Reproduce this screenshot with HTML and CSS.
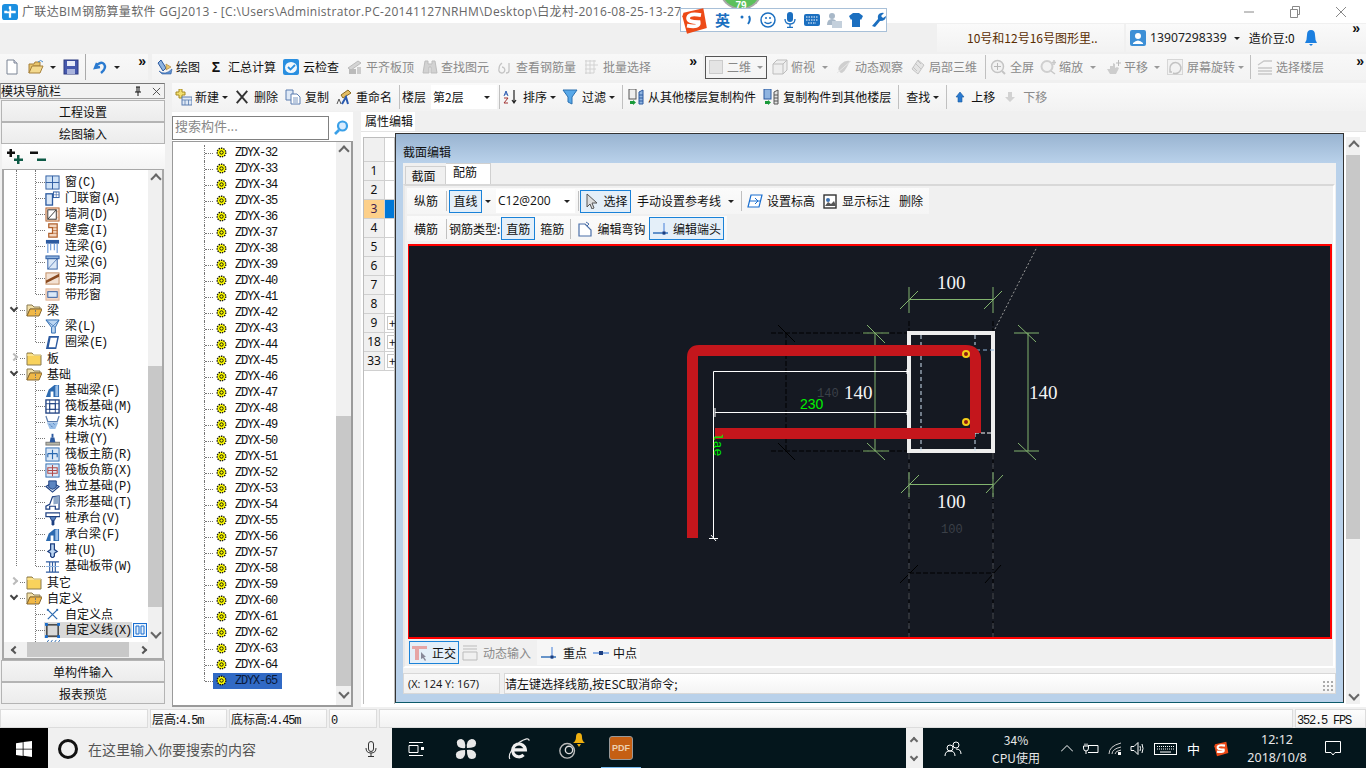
FILE: index.html
```html
<!DOCTYPE html>
<html lang="zh-CN">
<head>
<meta charset="utf-8">
<title>广联达BIM钢筋算量软件 GGJ2013</title>
<link rel="stylesheet" href="styles.css">
</head>
<body>
<svg class="defs" xmlns="http://www.w3.org/2000/svg">
  <symbol id="new" viewBox="0 0 16 16"><path d="M3 1h7l3 3v11H3z" fill="#fff" stroke="#7a8494"/><path d="M10 1v3h3" fill="#dde" stroke="#7a8494"/></symbol>
  <symbol id="open" viewBox="0 0 16 16"><path d="M1 5h5l1-2h5v4H5L1 14z" fill="#e8c56c" stroke="#a6803a"/><path d="M1 14l3-7h11l-3 7z" fill="#f3d98e" stroke="#a6803a"/><path d="M10 3q3-3 5 0" fill="none" stroke="#4b8fd0"/></symbol>
  <symbol id="save" viewBox="0 0 16 16"><rect x="1" y="1" width="14" height="14" fill="#4658ad" stroke="#2d3a80"/><rect x="4" y="2" width="8" height="5" fill="#e8ecf8"/><rect x="4" y="10" width="8" height="5" fill="#aab4dc"/></symbol>
  <symbol id="undo" viewBox="0 0 16 16"><path d="M4 4l-2 5 5-1M3 7q5-5 8-2 3 4-3 9" fill="none" stroke="#2a7ad0" stroke-width="2.4"/></symbol>
  <symbol id="draw" viewBox="0 0 16 16"><path d="M4 1l5 8-3 3-5-8z" fill="#8fb4e0" stroke="#2c5aa0"/><path d="M2 12q6 5 13-2l-1 5H5z" fill="#5c8fd0" stroke="#2c5aa0" stroke-width=".6"/><path d="M9 5l5 3-5 3z" fill="#e8c56c" stroke="#a6803a" stroke-width=".6"/></symbol>
  <symbol id="cloud" viewBox="0 0 16 16"><rect width="16" height="16" rx="2" fill="#2a8fe0"/><ellipse cx="8" cy="8.500" rx="6" ry="5.500" fill="#f2f8fd"/><path d="M5 8l2.500 2.500L12 6" fill="none" stroke="#2a8fe0" stroke-width="1.800"/></symbol>
  <symbol id="flat" viewBox="0 0 16 16"><path d="M1 9l10-7 3 2-10 7z" fill="#d4d4d4" stroke="#bbb"/><rect x="2" y="10" width="7" height="5" fill="#bbb"/><path d="M10 8h4v7h-4z" fill="#ccc"/></symbol>
  <symbol id="bino" viewBox="0 0 16 16"><path d="M3 2h3v3h4V2h3l2 12H9V8H7v6H1z" fill="#d2d2d2" stroke="#bdbdbd"/></symbol>
  <symbol id="view" viewBox="0 0 16 16"><path d="M2 10a3 3 0 1 0 3-2M5 4q-3 2-3 6M12 4v8q0 2-3 2" fill="none" stroke="#c4c4c4" stroke-width="1.300"/></symbol>
  <symbol id="batch" viewBox="0 0 16 16"><path d="M1 2h11M1 6h13M1 10h11M1 14h9M2 1v14M6 1v14M10 1v13" fill="none" stroke="#d2d2d2"/></symbol>
  <symbol id="box" viewBox="0 0 16 16"><path d="M1 5l4-4h10v10l-4 4H1z M1 5h10v10M11 5l4-4" fill="#eee" stroke="#bdbdbd"/></symbol>
  <symbol id="orbit" viewBox="0 0 16 16"><path d="M3 12Q1 9 5 5t9-3q-1 2-3 6t-5 6q-2 0-3-2z" fill="#cfcfcf"/><path d="M1 14L15 2" stroke="#e6e6e6"/></symbol>
  <symbol id="cube3" viewBox="0 0 16 16"><path d="M8 1l6 5-6 9-6-5z" fill="#e4e4e4" stroke="#c4c4c4"/><path d="M5 4l6 6M8 2l3 3M3 8l4 4" stroke="#c4c4c4"/></symbol>
  <symbol id="full" viewBox="0 0 16 16"><circle cx="7.500" cy="7.500" r="6" fill="#f2f2f2" stroke="#c4c4c4" stroke-width="1.500"/><path d="M7.500 4v7M4 7.500h7" stroke="#b8b8b8"/><path d="M12 12l3 3" stroke="#c4c4c4" stroke-width="2"/></symbol>
  <symbol id="zoom" viewBox="0 0 16 16"><circle cx="7" cy="7.500" r="5.500" fill="#f2f2f2" stroke="#cfcfcf" stroke-width="2"/><path d="M11 12l4 3M14 1v5M12 3.500h4" stroke="#c8c8c8" stroke-width="1.500"/></symbol>
  <symbol id="pan" viewBox="0 0 16 16"><path d="M2 10l3 5h6l3-6-2-1-2 1V5L8 4v3L5 7v3z" fill="#cdcdcd"/><path d="M11 4h5M13.500 1v6" stroke="#bbb"/></symbol>
  <symbol id="rotate" viewBox="0 0 16 16"><rect x=".5" y=".5" width="15" height="15" fill="#f2f2f2" stroke="#d6d6d6"/><path d="M3 10a5.500 5.500 0 1 1 3 4M5 13l-2 0 0-3" fill="none" stroke="#c2c2c2" stroke-width="1.500"/></symbol>
  <symbol id="layers" viewBox="0 0 16 16"><path d="M1 6l6-4h8M1 9h14M1 12h14M1 15h14" fill="none" stroke="#c8c8c8" stroke-width="1.300"/></symbol>
  <symbol id="add" viewBox="0 0 17 17"><path d="M4 0h3v3h3v3H7v3H4V6H1V3h3z" fill="#f2e070" stroke="#a88a20"/><rect x="7" y="8" width="10" height="8" fill="#dfe9f6" stroke="#5b7db0"/><path d="M7 11h10M10 11v5M13.500 11v5" stroke="#5b7db0" stroke-width=".8"/></symbol>
  <symbol id="del" viewBox="0 0 16 16"><path d="M2 1l12 14M14 1L2 15" stroke="#333" stroke-width="2.200"/></symbol>
  <symbol id="copy" viewBox="0 0 16 16"><path d="M1 1h7v10H1z" fill="#dfe9f6" stroke="#5b7db0"/><path d="M6 5h6l3 3v7H6z" fill="#fff" stroke="#5b7db0"/><path d="M8 9h5M8 11h5M8 13h5" stroke="#5b7db0" stroke-width=".8"/></symbol>
  <symbol id="rename" viewBox="0 0 16 16"><path d="M5 6l7-5 3 3-8 5z" fill="#e3bd63" stroke="#8a6a20"/><path d="M1 15l2-5 2 5" fill="none" stroke="#555"/><path d="M6 15l4-7 2 7" fill="none" stroke="#2a5ab0" stroke-width="2"/></symbol>
  <symbol id="sort" viewBox="0 0 16 16"><path d="M1 7l2-5 2 5M2 5h2" fill="none" stroke="#2a5ab0"/><path d="M1 9h4l-4 5h4" fill="none" stroke="#a03030"/><path d="M11 1v13M9 11l2 3 2-3" fill="none" stroke="#222" stroke-width="1.200"/></symbol>
  <symbol id="filter" viewBox="0 0 16 16"><path d="M1 1h14L10 8v7l-4-2V8z" fill="#58a8e8" stroke="#2a70b0"/></symbol>
  <symbol id="fromf" viewBox="0 0 16 16"><rect x="1" y="0" width="7" height="10" fill="#eee" stroke="#555"/><path d="M2 12h3v-1l3 2.500-3 2.500v-1H2z" fill="#1a9a3a"/><path d="M11 3l4-2v14h-4z" fill="#8fb4e0" stroke="#2c5aa0"/><path d="M11 6h4M11 9h4M11 12h4" stroke="#2c5aa0"/></symbol>
  <symbol id="tof" viewBox="0 0 16 16"><rect x="1" y="0" width="7" height="10" fill="#8fb4e0" stroke="#2c5aa0"/><path d="M2 12h3v-1l3 2.500-3 2.500v-1H2z" fill="#1a9a3a"/><path d="M11 3l4-2v14h-4z" fill="#e2e2e2" stroke="#555"/><path d="M11 6h4M11 9h4M11 12h4" stroke="#555"/></symbol>
  <symbol id="up" viewBox="0 0 10 12"><path d="M5 1l4 5H7v5H3V6H1z" fill="#2a7ad0" stroke="#1a5aa0" stroke-width=".6"/></symbol>
  <symbol id="down" viewBox="0 0 12 12"><path d="M6 11l5-5H8V1H4v5H1z" fill="#d2d2d2"/></symbol>
  <symbol id="gear" viewBox="0 0 11 11"><circle cx="5.500" cy="5.500" r="4.300" fill="#ff0" stroke="#111" stroke-width="1.400" stroke-dasharray="1.400 1"/><circle cx="5.500" cy="5.500" r="1.700" fill="#ff0" stroke="#111"/></symbol>
  <symbol id="folder" viewBox="0 0 16 16"><path d="M1 3h5l2 2h7v10H1z" fill="#f8d25c" stroke="#8a7a50"/><path d="M1 5h14" stroke="#fff2b8"/></symbol>
  <symbol id="folderopen" viewBox="0 0 16 16"><path d="M1 3h5l2 2h6v2H4L1 14z" fill="#f3e0a8" stroke="#8a7a50"/><path d="M1 14l3-7h12l-3 7z" fill="#f0b848" stroke="#8a6a30"/></symbol>
  <symbol id="t1" viewBox="0 0 16 16"><rect x="1" y="1" width="14" height="14" fill="#cfe2f6" stroke="#2c5aa0"/><path d="M8 1v14M1 8h14" stroke="#2c5aa0"/></symbol>
  <symbol id="t2" viewBox="0 0 16 16"><rect x="1" y="3" width="7" height="12" fill="#dbe8f7" stroke="#2c5aa0" stroke-width="1.400"/><rect x="9" y="1" width="6" height="6" fill="#fff" stroke="#2c5aa0"/><path d="M12 1v6M9 4h6" stroke="#2c5aa0" stroke-width=".6"/></symbol>
  <symbol id="t3" viewBox="0 0 16 16"><rect x="1" y="1" width="14" height="14" fill="#f7dfcf" stroke="#b0602c"/><path d="M5 1v14M11 1v14M1 5h14M1 11h14" stroke="#e0a070" stroke-width=".7"/><rect x="3" y="3" width="9" height="10" fill="#fff" stroke="#333"/><path d="M3 13l9-10" stroke="#333"/></symbol>
  <symbol id="t4" viewBox="0 0 16 16"><path d="M4 1h9v14H4v-4h4V5H4z" fill="#f3d6c0" stroke="#b0602c" stroke-width="1.300"/><path d="M8 5h5M8 8h5M8 11h5" stroke="#b0602c" stroke-width=".7"/></symbol>
  <symbol id="t5" viewBox="0 0 16 16"><rect x="1" y="1" width="14" height="4" fill="#2c5aa0"/><path d="M3 5v10M13 5v10M6 5v7M10 5v7" stroke="#7aa3dd" stroke-width="1.400"/></symbol>
  <symbol id="t6" viewBox="0 0 16 16"><rect x="1" y="1" width="14" height="3" fill="#8fb4e0" stroke="#2c5aa0"/><rect x="3" y="4" width="10" height="11" fill="#dbe8f7" stroke="#2c5aa0"/><path d="M3 15l10-11" stroke="#2c5aa0" stroke-width=".7"/></symbol>
  <symbol id="t7" viewBox="0 0 16 16"><rect x="1" y="2" width="14" height="12" fill="#f3e2d4" stroke="#c08a60"/><path d="M1 10L15 3v3L1 13z" fill="#8a4a20"/></symbol>
  <symbol id="t8" viewBox="0 0 16 16"><rect x="1" y="2" width="14" height="12" fill="#f3d8c8" stroke="#e0b090"/><rect x="3" y="5" width="10" height="6" fill="#dbe8f7" stroke="#2c5aa0"/></symbol>
  <symbol id="t9" viewBox="0 0 16 16"><path d="M1 1h14l-4 8v6H7V9z" fill="#bcd6f2" stroke="#2c6ab0"/><path d="M1 1l10 8M15 1L7 9" stroke="#2c6ab0" stroke-width=".7"/></symbol>
  <symbol id="t10" viewBox="0 0 16 16"><path d="M4 1h11l-3 14H1z" fill="#2c5aa0"/><path d="M6 3h7l-2 10H4z" fill="#fff"/></symbol>
  <symbol id="t11" viewBox="0 0 16 16"><path d="M1 15l3-8 6-5h5v13H9V9H6v6z" fill="#2c6ab0"/><path d="M11 3l3-1v12h-3z" fill="#9cc0e8"/></symbol>
  <symbol id="t12" viewBox="0 0 16 16"><rect x="1" y="1" width="14" height="14" fill="#fff" stroke="#1d3f80" stroke-width="1.400"/><rect x="5" y="5" width="6" height="6" fill="#fff" stroke="#1d3f80"/><path d="M1 5h14M1 11h14M5 1v14M11 1v14" stroke="#1d3f80" stroke-width=".9"/></symbol>
  <symbol id="t13" viewBox="0 0 16 16"><path d="M1 1l2 6h10l2-6" fill="none" stroke="#5d7fb0" stroke-width="1.300"/><path d="M2 8h12l-3 7H5z" fill="#9cc0e8"/><path d="M5 10l1 1M9 9l1 1M7 12l1 1" stroke="#2c5aa0"/></symbol>
  <symbol id="t14" viewBox="0 0 16 16"><rect x="1" y="12" width="15" height="3" fill="#b8b8a8" stroke="#777"/><path d="M5 12l1-5h4l1 5z" fill="#2c5aa0"/><rect x="7" y="3" width="2" height="4" fill="#2c5aa0"/></symbol>
  <symbol id="t15" viewBox="0 0 16 16"><rect x="1" y="1" width="14" height="14" fill="#dbe8f7" stroke="#2c6ab0"/><path d="M8 3v10M3 7h10M3 7v4M13 7v4" fill="none" stroke="#2c6ab0" stroke-width="1.200"/></symbol>
  <symbol id="t16" viewBox="0 0 16 16"><rect x="1" y="1" width="14" height="14" fill="#dbe8f7" stroke="#2c6ab0"/><path d="M8 2v12M3 5h10v6H3zM3 8h10" fill="none" stroke="#b04a4a" stroke-width="1.100"/></symbol>
  <symbol id="t17" viewBox="0 0 16 16"><path d="M1 8l7-4 7 4-7 6z" fill="#dbe8f7" stroke="#1d3f80" stroke-width="1.200"/><path d="M4 2h8v7l-4 2-4-2z" fill="#5c85c0" stroke="#1d3f80"/></symbol>
  <symbol id="t18" viewBox="0 0 16 16"><path d="M1 15v-3l4-2 3-8 7-1v14h-4v-3H5v3z" fill="#fff" stroke="#1d3f80" stroke-width="1.300"/><path d="M9 2l6-1v8l-6 1z" fill="#8fa8c8"/></symbol>
  <symbol id="t19" viewBox="0 0 16 16"><rect x="1" y="2" width="15" height="4" fill="#fff" stroke="#1d3f80" stroke-width="1.300"/><path d="M5 6h7l-2 4H7z" fill="#5c85c0" stroke="#1d3f80"/><path d="M7 10h3v4l-1.500 2L7 14z" fill="#1d3f80"/></symbol>
  <symbol id="t20" viewBox="0 0 16 16"><path d="M6 1h4v6l3 2-3 2v3l-2 2-2-2v-3L3 9l3-2z" fill="#bcd6f2" stroke="#1d3f80" stroke-width="1.300"/></symbol>
  <symbol id="t21" viewBox="0 0 16 16"><path d="M1 3h14M1 14h14M5 3v11M11 3v11M8 3v11" fill="none" stroke="#2c5aa0" stroke-width="1.200"/><path d="M1 8h14" stroke="#8fb4e0"/></symbol>
  <symbol id="t22" viewBox="0 0 16 16"><path d="M3 3l10 10M13 3L3 13" stroke="#2c6ab0" stroke-width="1.300"/><rect x="2" y="2" width="2" height="2" fill="#2c6ab0"/><rect x="12" y="2" width="2" height="2" fill="#2c6ab0"/></symbol>
  <symbol id="t23" viewBox="0 0 16 16"><rect x="2" y="2" width="12" height="12" fill="none" stroke="#111" stroke-width="1.200"/><g fill="#1a6fd0"><rect x="0" y="0" width="3" height="3"/><rect x="13" y="0" width="3" height="3"/><rect x="0" y="13" width="3" height="3"/><rect x="13" y="13" width="3" height="3"/></g></symbol>
  <symbol id="t24" viewBox="0 0 16 16"><path d="M1 5l3-4M5 5l3-4M9 5l3-4M13 5l3-4" stroke="#2c6ab0"/></symbol>
  <symbol id="arrowsel" viewBox="0 0 16 16"><path d="M3 1l10 9H8l2 5-2 1-2-5-3 3z" fill="#ddd" stroke="#555"/></symbol>
  <symbol id="level" viewBox="0 0 16 16"><path d="M4 2h11l-3 12H1z" fill="#fff" stroke="#1a6fd0" stroke-width="1.200"/><path d="M2 8h11M8 11l3-3-3-3" fill="none" stroke="#1a6fd0"/></symbol>
  <symbol id="mark" viewBox="0 0 16 16"><rect x="2" y="2" width="12" height="13" fill="#fff" stroke="#333" stroke-width="1.400"/><circle cx="6" cy="7" r="2" fill="#3a70b0"/><path d="M3 13l3-4 3 2 3-3 2 5z" fill="#555"/></symbol>
  <symbol id="hook" viewBox="0 0 16 16"><path d="M2 3h6l6 6v6H2z" fill="#fff" stroke="#4a6fa8" stroke-width="1.200"/><path d="M9 1l3 2-2 2" fill="none" stroke="#4a6fa8"/></symbol>
  <symbol id="end" viewBox="0 0 16 16"><path d="M0 12h15" stroke="#1a5fb0" stroke-width="1.300"/><path d="M11 2v12" stroke="#6a9ae0" stroke-width="1.300"/><rect x="9.500" y="10.500" width="3" height="3" fill="#1d3f80"/></symbol>
  <symbol id="mid" viewBox="0 0 16 16"><path d="M0 8h16" stroke="#6a9ae0" stroke-width="1.500"/><rect x="6" y="6" width="4" height="4" fill="#1d3f80"/></symbol>
  <symbol id="ortho" viewBox="0 0 16 16"><path d="M0 1h15v3H7v11H3V4H0z" fill="#e6a5a5"/><path d="M9 7l5 5-2 0 2 3-1 1-2-3-2 1z" fill="#889"/></symbol>
  <symbol id="dyn" viewBox="0 0 16 16"><path d="M1 1h14M1 4h14M1 7h14v8H1z" fill="none" stroke="#bbb"/></symbol>
  <symbol id="zoomglass" viewBox="0 0 16 16"><circle cx="9.500" cy="6" r="4.500" fill="#d8ecff" stroke="#3aa0e8" stroke-width="2.200"/><path d="M6 10l-4 4" stroke="#3aa0e8" stroke-width="2.600"/></symbol>
  <symbol id="slogo" viewBox="0 0 24 24"><path d="M3 5l17-4 3 17-17 5-4-15z" fill="#ed4a17"/><path d="M18 7Q8 5 7 9t9 4q1 5-10 3" fill="none" stroke="#fff" stroke-width="3.200"/></symbol>
</svg>

<header class="titlebar">
  <svg class="applogo" viewBox="0 0 14 14"><rect width="14" height="14" rx="2.500" fill="#1b8fe0"/><path d="M7 2v10M2 7h10" stroke="#fff" stroke-width="2"/><rect x="4.500" y="4.500" width="2" height="2" fill="#1b8fe0"/></svg>
  <span class="titletext">广联达BIM钢筋算量软件 GGJ2013 - [C:\Users\Administrator.PC-20141127NRHM\Desktop\白龙村-2016-08-25-13-27</span>
  <div class="winbtns">
    <svg viewBox="0 0 12 12"><path d="M1 6h10" stroke="#888"/></svg>
    <svg viewBox="0 0 12 12"><path d="M1.500 3.500h7v8h-7zM3.500 3V.5h7v8H9" fill="none" stroke="#888"/></svg>
    <svg viewBox="0 0 12 12"><path d="M1 1l10 10M11 1L1 11" stroke="#888"/></svg>
  </div>
</header>

<div class="accountrow">
  <div class="filetab">10号和12号16号图形里..</div>
  <div class="account">
    <svg class="avatar" viewBox="0 0 16 16"><rect width="16" height="16" rx="2" fill="#3d8fd6"/><circle cx="8" cy="6" r="3" fill="#fff"/><path d="M3 13q5-5 10 0v1H3z" fill="#fff"/></svg>
    <span class="phone">13907298339</span><i class="caret dark c-phone"></i><span class="beans">造价豆:0</span>
    <svg class="bell" viewBox="0 0 14 18"><path d="M7 1q4 0 4 5t2 8H1q2-3 2-8t4-5z" fill="#1b7fe0"/><path d="M5 15h4l-2 2z" fill="#1b7fe0"/></svg>
    <span class="more more-a">»</span>
  </div>
</div>

<div class="toolrow1">
  <div class="tb g-a">
    <svg class="ic"><use href="#new"/></svg>
    <svg class="ic ml8"><use href="#open"/></svg><i class="caret dark ml6"></i>
    <svg class="ic ml7"><use href="#save"/></svg>
    <i class="sep ml6 tall"></i>
    <svg class="ic ml7"><use href="#undo"/></svg><i class="caret dark ml5"></i>
    <span class="more">»</span>
  </div>
  <div class="tb g-b">
    <span class="ti"><svg class="ic"><use href="#draw"/></svg>绘图</span>
    <b class="sigma">Σ</b><span class="ti">汇总计算</span>
    <span class="ti ml7 g4"><svg class="ic"><use href="#cloud"/></svg>云检查</span>
    <span class="ti off ml8"><svg class="ic"><use href="#flat"/></svg>平齐板顶</span>
    <span class="ti off ml8"><svg class="ic"><use href="#bino"/></svg>查找图元</span>
    <span class="ti off ml8"><svg class="ic"><use href="#view"/></svg>查看钢筋量</span>
    <span class="ti off ml8"><svg class="ic"><use href="#batch"/></svg>批量选择</span>
    <span class="more more-b">»</span>
  </div>
  <div class="tb g-c">
    <div class="combo2d"><i class="sq"></i><span>二维</span><i class="caret"></i></div>
    <span class="ti off ml5"><svg class="ic"><use href="#box"/></svg>俯视</span><i class="caret ml7"></i>
    <span class="ti off ml8"><svg class="ic"><use href="#orbit"/></svg>动态观察</span>
    <span class="ti off ml7"><svg class="ic"><use href="#cube3"/></svg>局部三维</span>
    <i class="sep ml8"></i>
    <span class="ti off ml4 g4"><svg class="ic"><use href="#full"/></svg>全屏</span>
    <span class="ti off ml6"><svg class="ic"><use href="#zoom"/></svg>缩放</span><i class="caret ml7"></i>
    <span class="ti off ml9"><svg class="ic"><use href="#pan"/></svg>平移</span><i class="caret ml6"></i>
    <span class="ti off ml7 g4"><svg class="ic"><use href="#rotate"/></svg>屏幕旋转</span><i class="caret ml3"></i>
    <i class="sep ml6"></i>
    <span class="ti off ml6"><svg class="ic"><use href="#layers"/></svg>选择楼层</span>
    <span class="more">»</span>
  </div>
</div>

<main class="body">
  <aside class="nav">
    <div class="navtitle"><span>模块导航栏</span><svg class="pin" viewBox="0 0 10 10"><path d="M3 1h4M4 1v5M6 1v5M2 6h6M5 6v4" stroke="#111" fill="none"/></svg><svg class="navx" viewBox="0 0 10 10"><path d="M1 1l8 8M9 1L1 9" stroke="#444"/></svg></div>
    <div class="navbtn">工程设置</div>
    <div class="navbtn">绘图输入</div>
    <div class="expander">
      <svg viewBox="0 0 16 15" class="pm"><path d="M2.500 0h2.500v2.500h3V5H5v3H2.500V5H0V2.500h2.500z" fill="#111"/><path d="M10 6h2.500v3.500H16V12h-3.500v3H10v-3H7V9.500h3z" fill="#0d5a46"/></svg>
      <svg viewBox="0 0 16 15" class="pm"><path d="M0 2.500h8V5H0z" fill="#111"/><path d="M7 9.500h9V12H7z" fill="#0d5a46"/></svg>
    </div>
    <div class="treeframe">
      <div class="treeview">
        <div class="tree">
          <div class="root">
            <div class="kids kids-top">
              <div class="leaf"><svg class="ti16"><use href="#t1"/></svg><span>窗<i>(C)</i></span></div>
              <div class="leaf"><svg class="ti16"><use href="#t2"/></svg><span>门联窗<i>(A)</i></span></div>
              <div class="leaf"><svg class="ti16"><use href="#t3"/></svg><span>墙洞<i>(D)</i></span></div>
              <div class="leaf"><svg class="ti16"><use href="#t4"/></svg><span>壁龛<i>(I)</i></span></div>
              <div class="leaf"><svg class="ti16"><use href="#t5"/></svg><span>连梁<i>(G)</i></span></div>
              <div class="leaf"><svg class="ti16"><use href="#t6"/></svg><span>过梁<i>(G)</i></span></div>
              <div class="leaf"><svg class="ti16"><use href="#t7"/></svg><span>带形洞</span></div>
              <div class="leaf"><svg class="ti16"><use href="#t8"/></svg><span>带形窗</span></div>
            </div>
            <div class="grp"><i class="chev open"></i><svg class="ti16"><use href="#folderopen"/></svg><span>梁</span></div>
            <div class="kids">
              <div class="leaf"><svg class="ti16"><use href="#t9"/></svg><span>梁<i>(L)</i></span></div>
              <div class="leaf"><svg class="ti16"><use href="#t10"/></svg><span>圈梁<i>(E)</i></span></div>
            </div>
            <div class="grp"><i class="chev"></i><svg class="ti16"><use href="#folder"/></svg><span>板</span></div>
            <div class="grp"><i class="chev open"></i><svg class="ti16"><use href="#folderopen"/></svg><span>基础</span></div>
            <div class="kids">
              <div class="leaf"><svg class="ti16"><use href="#t11"/></svg><span>基础梁<i>(F)</i></span></div>
              <div class="leaf"><svg class="ti16"><use href="#t12"/></svg><span>筏板基础<i>(M)</i></span></div>
              <div class="leaf"><svg class="ti16"><use href="#t13"/></svg><span>集水坑<i>(K)</i></span></div>
              <div class="leaf"><svg class="ti16"><use href="#t14"/></svg><span>柱墩<i>(Y)</i></span></div>
              <div class="leaf"><svg class="ti16"><use href="#t15"/></svg><span>筏板主筋<i>(R)</i></span></div>
              <div class="leaf"><svg class="ti16"><use href="#t16"/></svg><span>筏板负筋<i>(X)</i></span></div>
              <div class="leaf"><svg class="ti16"><use href="#t17"/></svg><span>独立基础<i>(P)</i></span></div>
              <div class="leaf"><svg class="ti16"><use href="#t18"/></svg><span>条形基础<i>(T)</i></span></div>
              <div class="leaf"><svg class="ti16"><use href="#t19"/></svg><span>桩承台<i>(V)</i></span></div>
              <div class="leaf"><svg class="ti16"><use href="#t11"/></svg><span>承台梁<i>(F)</i></span></div>
              <div class="leaf"><svg class="ti16"><use href="#t20"/></svg><span>桩<i>(U)</i></span></div>
              <div class="leaf"><svg class="ti16"><use href="#t21"/></svg><span>基础板带<i>(W)</i></span></div>
            </div>
          </div>
          <div class="grp"><i class="chev"></i><svg class="ti16"><use href="#folder"/></svg><span>其它</span></div>
          <div class="grp"><i class="chev open"></i><svg class="ti16"><use href="#folderopen"/></svg><span>自定义</span></div>
          <div class="kids">
            <div class="leaf"><svg class="ti16"><use href="#t22"/></svg><span>自定义点</span></div>
            <div class="leaf sel"><svg class="ti16"><use href="#t23"/></svg><span>自定义线<i>(X)</i></span><svg class="ti-tail" viewBox="0 0 14 14"><rect x=".5" y=".5" width="13" height="13" fill="#e8f2fc" stroke="#1a6fd0"/><path d="M3 3h3v8H3zM8 3h3v8H8z" fill="none" stroke="#1a6fd0"/></svg></div>
            <div class="leaf"><svg class="ti16"><use href="#t24"/></svg></div>
          </div>
        </div>
        <div class="vscroll vs-nav"><i class="up"></i><b class="spacer s1"></b><b class="thumb th1"></b><b class="spacer s2"></b><i class="dn"></i></div>
      </div>
      <div class="hscroll"><i class="lf"></i><b class="hthumb"></b><i class="rt"></i></div>
    </div>
    <div class="navbtn b2">单构件输入</div>
    <div class="navbtn b3">报表预览</div>
  </aside>

  <section class="work">
    <div class="tb row2">
      <span class="ti"><svg class="ic17"><use href="#add"/></svg>新建</span><i class="caret dark ml3"></i>
      <span class="ti ml7 g5"><svg class="ic14"><use href="#del"/></svg>删除</span>
      <span class="ti ml7 g4"><svg class="ic"><use href="#copy"/></svg>复制</span>
      <span class="ti ml7 g4"><svg class="ic"><use href="#rename"/></svg>重命名</span>
      <i class="sep ml7"></i>
      <span class="ti ml2">楼层</span>
      <div class="floorcombo"><span>第2层</span><i class="caret dark"></i></div>
      <i class="sep ml2"></i>
      <span class="ti ml3 g4"><svg class="ic"><use href="#sort"/></svg>排序</span><i class="caret dark ml3"></i>
      <span class="ti ml6 g4"><svg class="ic"><use href="#filter"/></svg>过滤</span><i class="caret dark ml3"></i>
      <i class="sep ml7"></i>
      <span class="ti ml5 g4"><svg class="ic"><use href="#fromf"/></svg>从其他楼层复制构件</span>
      <span class="ti ml7 g4"><svg class="ic"><use href="#tof"/></svg>复制构件到其他楼层</span>
      <i class="sep ml7"></i>
      <span class="ti ml7">查找</span><i class="caret dark ml3"></i>
      <i class="sep ml7"></i>
      <span class="ti ml8 g6"><svg class="ic10"><use href="#up"/></svg>上移</span>
      <span class="ti off ml9 g7"><svg class="ic12"><use href="#down"/></svg>下移</span>
    </div>
    <div class="workbody">
      <div class="complist">
        <div class="searchrow"><div class="searchbox">搜索构件...</div><svg class="glass"><use href="#zoomglass"/></svg></div>
        <div class="listframe">
          <div class="list">
            <div class="z"><svg><use href="#gear"/></svg>ZDYX-32</div>
            <div class="z"><svg><use href="#gear"/></svg>ZDYX-33</div>
            <div class="z"><svg><use href="#gear"/></svg>ZDYX-34</div>
            <div class="z"><svg><use href="#gear"/></svg>ZDYX-35</div>
            <div class="z"><svg><use href="#gear"/></svg>ZDYX-36</div>
            <div class="z"><svg><use href="#gear"/></svg>ZDYX-37</div>
            <div class="z"><svg><use href="#gear"/></svg>ZDYX-38</div>
            <div class="z"><svg><use href="#gear"/></svg>ZDYX-39</div>
            <div class="z"><svg><use href="#gear"/></svg>ZDYX-40</div>
            <div class="z"><svg><use href="#gear"/></svg>ZDYX-41</div>
            <div class="z"><svg><use href="#gear"/></svg>ZDYX-42</div>
            <div class="z"><svg><use href="#gear"/></svg>ZDYX-43</div>
            <div class="z"><svg><use href="#gear"/></svg>ZDYX-44</div>
            <div class="z"><svg><use href="#gear"/></svg>ZDYX-45</div>
            <div class="z"><svg><use href="#gear"/></svg>ZDYX-46</div>
            <div class="z"><svg><use href="#gear"/></svg>ZDYX-47</div>
            <div class="z"><svg><use href="#gear"/></svg>ZDYX-48</div>
            <div class="z"><svg><use href="#gear"/></svg>ZDYX-49</div>
            <div class="z"><svg><use href="#gear"/></svg>ZDYX-50</div>
            <div class="z"><svg><use href="#gear"/></svg>ZDYX-51</div>
            <div class="z"><svg><use href="#gear"/></svg>ZDYX-52</div>
            <div class="z"><svg><use href="#gear"/></svg>ZDYX-53</div>
            <div class="z"><svg><use href="#gear"/></svg>ZDYX-54</div>
            <div class="z"><svg><use href="#gear"/></svg>ZDYX-55</div>
            <div class="z"><svg><use href="#gear"/></svg>ZDYX-56</div>
            <div class="z"><svg><use href="#gear"/></svg>ZDYX-57</div>
            <div class="z"><svg><use href="#gear"/></svg>ZDYX-58</div>
            <div class="z"><svg><use href="#gear"/></svg>ZDYX-59</div>
            <div class="z"><svg><use href="#gear"/></svg>ZDYX-60</div>
            <div class="z"><svg><use href="#gear"/></svg>ZDYX-61</div>
            <div class="z"><svg><use href="#gear"/></svg>ZDYX-62</div>
            <div class="z"><svg><use href="#gear"/></svg>ZDYX-63</div>
            <div class="z"><svg><use href="#gear"/></svg>ZDYX-64</div>
            <div class="z cur"><svg><use href="#gear"/></svg><em>ZDYX-65</em></div>
          </div>
          <div class="vscroll vs-list"><i class="up"></i><b class="spacer s3"></b><b class="thumb th2"></b><i class="dn"></i></div>
        </div>
      </div>
      <div class="props">
        <div class="proptab">属性编辑</div>
        <div class="propframe">
          <div class="grid">
            <div class="gh"><b></b><u></u></div>
            <div class="gr"><b>1</b><u></u></div>
            <div class="gr"><b>2</b><u></u></div>
            <div class="gr now"><b>3</b><u></u></div>
            <div class="gr"><b>4</b><u></u></div>
            <div class="gr"><b>5</b><u></u></div>
            <div class="gr"><b>6</b><u></u></div>
            <div class="gr"><b>7</b><u></u></div>
            <div class="gr"><b>8</b><u></u></div>
            <div class="gr"><b>9</b><u>+</u></div>
            <div class="gr"><b>18</b><u>+</u></div>
            <div class="gr"><b>33</b><u>+</u></div>
          </div>
          <div class="vscroll vs-prop"><i class="up"></i><b class="thumb th3"></b><b class="spacer s4"></b><i class="dn"></i></div>
        </div>
      </div>
    </div>
  </section>
</main>

<footer class="status">
  <div class="sc s-a"></div>
  <div class="sc s-b">层高:<tt>4.5m</tt></div>
  <div class="sc s-c">底标高:<tt>4.45m</tt></div>
  <div class="sc s-d"><tt>0</tt></div>
  <div class="sc s-e"></div>
  <div class="sc s-f"><tt>352.5 FPS</tt></div>
</footer>

<div class="taskbar">
  <div class="start"><svg viewBox="0 0 16 16"><path d="M0 2.200l6.700-1v6.500H0zM7.500 1.100L16 0v7.700H7.500zM0 8.500h6.700V15L0 14zM7.500 8.500H16V16l-8.500-1.200z" fill="#fff"/></svg></div>
  <div class="tsearch">
    <i class="cortana"></i><span>在这里输入你要搜索的内容</span>
    <svg class="mic" viewBox="0 0 12 16"><rect x="3.500" y=".5" width="5" height="10" rx="2.500" fill="none" stroke="#333"/><path d="M1 7q0 5 5 5t5-5M6 12v3M3 15.500h6" fill="none" stroke="#333"/></svg>
  </div>
  <div class="tapps">
    <svg class="tv" viewBox="0 0 16 14"><path d="M1 .5h14M1 13.500h14M1 3.500h9v7H1z" fill="none" stroke="#fff"/><rect x="13" y="5" width="3" height="3" fill="#fff"/></svg>
    <svg class="app a2" viewBox="0 0 24 24"><g fill="#e8e8e8"><path d="M11 11Q2 12 2 5q0-4 5-4 5 1 4 10z"/><path d="M13 11q-1-9 5-10 5 0 5 5 0 5-10 5z"/><path d="M13 13q9-1 10 5 0 5-5 5-5 0-5-10z"/><path d="M11 13q1 9-5 10-5 0-5-5 0-5 10-5z"/></g></svg>
    <svg class="app a3" viewBox="0 0 24 24"><path d="M6 13h13a7 7 0 1 0-2 5.500" fill="none" stroke="#f0f0f0" stroke-width="3.400"/><path d="M2 23Q-1 16 12 5q11-7 11-2" fill="none" stroke="#e8e8e8" stroke-width="1.300"/></svg>
    <span class="a4"><svg class="app" viewBox="0 0 24 24"><circle cx="10" cy="14" r="8" fill="none" stroke="#bbb" stroke-width="1.500"/><circle cx="12" cy="13" r="4" fill="none" stroke="#ddd" stroke-width="1.500"/></svg><svg class="tbell" viewBox="0 0 14 14"><path d="M7 0q3 0 3 4t3 6H1q3-2 3-6t3-4zM5 11h4l-2 3z" fill="#f0b010"/></svg></span>
    <div class="a5"><div class="pdf">PDF</div></div>
  </div>
  <div class="tray">
    <div class="traybar"><i></i><i></i></div>
    <svg class="people" viewBox="0 0 18 18"><circle cx="12" cy="5" r="3" fill="none" stroke="#fff"/><circle cx="6" cy="8" r="3" fill="none" stroke="#fff"/><path d="M1 16q0-5 5-5t5 5M12 9q5 0 5 5" fill="none" stroke="#fff"/></svg>
    <div class="cpu"><span>34%</span><span>CPU使用</span></div>
    <svg class="chevup" viewBox="0 0 12 7"><path d="M0 6.500l6-6 6 6" fill="none" stroke="#fff"/></svg>
    <svg class="batt" viewBox="0 0 16 11"><path d="M5 2.500h10v7H5M2 .5v2M4 .5v2M.5 3h5v2q0 3-2.500 3T.5 5zM3 8v3" fill="none" stroke="#fff"/></svg>
    <svg class="wifi" viewBox="0 0 14 13"><path d="M1 12Q1 4 13 1M4 12q0-5 9-7M7 12q0-3 6-4" fill="none" stroke="#ccc"/><rect x="10" y="10" width="3" height="3" fill="#fff"/></svg>
    <svg class="vol" viewBox="0 0 16 13"><path d="M1 4.500h3l4-4v12l-4-4H1zM10 4q1 2.500 0 5M12 2q2 4.500 0 9" fill="none" stroke="#fff"/></svg>
    <svg class="kbd" viewBox="0 0 23 12"><rect x=".5" y=".5" width="22" height="11" fill="none" stroke="#fff"/><path d="M3 3.500h17M3 6h17" stroke="#fff" stroke-dasharray="1 1"/><path d="M6 9h11" stroke="#fff"/></svg>
    <span class="zh">中</span>
    <svg class="tray-s"><use href="#slogo"/></svg>
    <div class="clock"><span>12:12</span><span>2018/10/8</span></div>
    <svg class="notif" viewBox="0 0 16 15"><path d="M.5.500h15v11H10l-2 2.500-2-2.500H.5z" fill="none" stroke="#fff"/></svg>
  </div>
</div>

<div class="ball"><span>79</span></div>
<div class="ime">
  <svg class="ime-s"><use href="#slogo"/></svg>
  <span class="ime-en">英</span>
  <svg class="ime-i p" viewBox="0 0 16 16"><circle cx="4" cy="5" r="1.500" fill="#1b6fc0"/><path d="M11 4q2 4-1 8" fill="none" stroke="#1b6fc0" stroke-width="2"/></svg>
  <svg class="ime-i" viewBox="0 0 16 16"><circle cx="8" cy="8" r="7" fill="none" stroke="#1b6fc0" stroke-width="1.500"/><path d="M6 5v2M10 5v2" stroke="#1b6fc0" stroke-width="1.500"/><path d="M4.500 10q3.500 3 7 0" fill="none" stroke="#1b6fc0" stroke-width="1.300"/></svg>
  <svg class="ime-i" viewBox="0 0 16 16"><rect x="5" y="0" width="6" height="10" rx="3" fill="#1b6fc0"/><path d="M3 7q0 5 5 5t5-5M8 12v3M5 15.500h6" fill="none" stroke="#1b6fc0" stroke-width="1.300"/></svg>
  <svg class="ime-i" viewBox="0 0 16 16"><rect x="0" y="2" width="16" height="12" rx="2" fill="#1b6fc0"/><path d="M2 5h12M2 8h12M4 11h8" stroke="#fff" stroke-dasharray="1.500 1"/></svg>
  <svg class="ime-i" viewBox="0 0 16 16"><circle cx="6" cy="4" r="3" fill="#a8b8c8"/><path d="M1 13q0-6 5-6t5 6z" fill="#a8b8c8"/><rect x="6" y="9" width="10" height="7" fill="#c4d0dc"/></svg>
  <svg class="ime-i" viewBox="0 0 16 16"><path d="M1 4l4-3h6l4 3-2 4-1-1v8H4V7L3 8z" fill="#1b6fc0"/></svg>
  <svg class="ime-i" viewBox="0 0 16 16"><path d="M2 14l6-7q-1-5 3-6 2-.5 3 0l-3 3 2 2 3-2q0 5-6 5l-5 6z" fill="#1b6fc0"/></svg>
</div>

<div class="dialog">
  <div class="dtitle">截面编辑</div>
  <div class="dcontent">
    <div class="dtabs"><span class="dtab">截面</span><span class="dtab on">配筋</span></div>
    <div class="dpanel">
      <div class="dtools">
        <div class="dbar bar1">
          <span class="lbl">纵筋</span><i class="sep ml8 s20"></i>
          <span class="hbtn ml2 b-line">直线</span><i class="caret dark ml3"></i>
          <div class="rebarcombo"><span>C12@200</span><i class="caret dark"></i></div>
          <i class="sep s20 ml3"></i>
          <span class="hbtn ml1 b-sel"><svg class="ic"><use href="#arrowsel"/></svg>选择</span>
          <span class="lbl ml6">手动设置参考线</span><i class="caret dark ml7"></i>
          <i class="sep s20 ml7"></i>
          <span class="ti ml5 g4"><svg class="ic"><use href="#level"/></svg>设置标高</span>
          <span class="ti ml7 g4"><svg class="ic"><use href="#mark"/></svg>显示标注</span>
          <span class="lbl ml9">删除</span>
        </div>
        <div class="dbar bar2">
          <span class="lbl">横筋</span><i class="sep ml8 s20"></i>
          <span class="lbl ml2">钢筋类型:</span>
          <span class="hbtn ml1 b-str">直筋</span>
          <span class="lbl ml5">箍筋</span><i class="sep ml6 s20"></i>
          <span class="ti ml6 g4"><svg class="ic"><use href="#hook"/></svg>编辑弯钩</span>
          <span class="hbtn ml4 b-end"><svg class="ic"><use href="#end"/></svg>编辑端头</span>
        </div>
      </div>
      <div class="canvas">
        <svg viewBox="409 246 921 391" width="921" height="391" xmlns="http://www.w3.org/2000/svg">
          <g class="blk">
            <path d="M771 333H907M771 451H907M786 333V451M909 453V640M993 453V640M909 321V331M993 321V331M909 573H993"/>
          </g>
          <g class="dia"><path d="M778 325L795 342M778 443L795 460M900 583L918 565M985 583L1001 565"/></g>
          <path class="grid-g" d="M909 453V640M993 453V640" />
          <path class="wdash" d="M995 329L1037 247"/>
          <rect class="rect" x="909" y="333" width="84" height="118"/>
          <path class="bdash" d="M921 335V451M975 335V345M975 433V451"/>
          <path class="bdash2" d="M976 350H994"/>
          <path class="wdash2" d="M975 433H993"/>
          <g class="dim">
            <path d="M909 299.500H993M909 287V313M993 287V313M900 309L918 291M984 309L1002 291"/>
            <path d="M875 333V451M863 333H889M863 451H889M867 325L885 343M867 443L885 460"/>
            <path d="M1028 333V451M1014 333H1039M1014 451H1039M1018 325L1036 342M1018 443L1036 460"/>
            <path d="M909 484.500H993M909 472V497M993 472V497M901 493L919 475M986 493L1003 475"/>
          </g>
          <path class="wline" d="M909 371.500H713.500V538M909 412.500H715M709 538.500H718M715 408V417M907 369V374M907 410V415M711 535L716 541"/>
          <path class="rebar" d="M692.500 538V357Q692.500 350.500 699 350.500H966Q975.500 350.500 975.500 360V433"/>
          <rect class="rebarf" x="715" y="428" width="260" height="11"/>
          <circle class="pt" cx="966" cy="354" r="3"/>
          <circle class="pt" cx="966" cy="422" r="3"/>
          <text class="t19" x="937" y="289">100</text>
          <text class="t19" x="844" y="399">140</text>
          <text class="t19" x="1029" y="399">140</text>
          <text class="t19" x="937" y="508">100</text>
          <text class="tdim" x="817" y="397">140</text>
          <text class="tdim" x="941" y="533">100</text>
          <text class="tgreen" x="800" y="409">230</text>
          <text class="tlae" transform="translate(714 433) rotate(90)">lae</text>
        </svg>
      </div>
      <div class="dbottom">
        <span class="hbtn b-ortho"><svg class="ic"><use href="#ortho"/></svg>正交</span>
        <span class="ti off ml3 g5"><svg class="ic"><use href="#dyn"/></svg>动态输入</span>
        <div class="snapgroup">
          <span class="ti g6"><svg class="ic"><use href="#end"/></svg>重点</span>
          <span class="ti ml6 g4"><svg class="ic"><use href="#mid"/></svg>中点</span>
        </div>
      </div>
    </div>
    <div class="dstatus">
      <div class="coord">(X: 124 Y: 167)</div>
      <div class="msg">请左键选择线筋,按ESC取消命令;<i class="grip"></i></div>
    </div>
  </div>
</div>
</body>
</html>
```
FILE: styles.css
```css
* { box-sizing: border-box; }
html, body { margin: 0; padding: 0; }
body {
  width: 1366px; height: 768px; overflow: hidden; position: relative;
  background: #f0f0f0; color: #111;
  font: 12px/16px "Noto Sans CJK SC", "Liberation Sans", sans-serif;
}
.defs { position: absolute; width: 0; height: 0; }
i, em, u, b, tt { font-style: normal; text-decoration: none; font-weight: normal; }

/* margins used between toolbar items */
.ml1 { margin-left: 1px; } .ml2 { margin-left: 2px; } .ml3 { margin-left: 3px; } .ml4 { margin-left: 4px; }
.ml5 { margin-left: 5px; } .ml6 { margin-left: 6px; } .ml7 { margin-left: 7px; }
.ml8 { margin-left: 8px; } .ml9 { margin-left: 9px; }

/* title bar */
.titlebar { height: 23px; background: #fff; display: flex; align-items: center; padding-left: 2px; }
.applogo { width: 16px; height: 16px; flex: none; }
.titletext { margin-left: 4px; color: #666; font-family: "Open Sans", "Noto Sans CJK SC", sans-serif; font-size: 12px; white-space: nowrap; letter-spacing: .33px; }
.winbtns { margin-left: auto; display: flex; }
.winbtns svg { width: 12px; height: 12px; margin-right: 34px; }
.winbtns svg:last-child { margin-right: 19px; }

.accountrow { height: 30px; display: flex; justify-content: flex-end; padding-top: 1px; }
.filetab { width: 187px; height: 28px; background: linear-gradient(#fafafa, #f2f2f2); color: #5a2d00; padding-left: 30px; line-height: 28px; white-space: nowrap; }
.account { width: 240px; margin-left: 2px; height: 28px; background: linear-gradient(#fafafa, #f2f2f2); display: flex; align-items: center; position: relative; padding-left: 4px; }
.avatar { width: 16px; height: 16px; }
.phone { margin-left: 4px; font-family: "Noto Sans", sans-serif; font-size: 12.2px; color: #222; }
.c-phone { margin-left: 7px; }
.beans { margin-left: 9px; }
.bell { width: 14px; height: 18px; margin-left: 9px; }
.more-a { position: absolute; right: 4px; top: -3px; }

.caret { display: inline-block; width: 0; height: 0; flex: none; border: 3px solid transparent; border-top: 3px solid #999; border-bottom: 0; }
.caret.dark { border-top-color: #222; }
.sep { display: block; flex: none; width: 1px; height: 24px; background: #c0c0c0; }
.sep.tall { height: 26px; background: #aaa; }
.sep.s20 { height: 20px; }
.more { margin-left: auto; align-self: flex-start; font: bold 14px/14px "Liberation Sans", sans-serif; color: #111; margin-right: 2px; }
.more-b { margin-right: 6px; }

/* toolbars */
.toolrow1 { height: 26px; margin-top: 1px; display: flex; }
.tb { display: flex; align-items: center; background: linear-gradient(#f8f8f8, #f3f3f3); }
.g-a { width: 148px; padding-left: 4px; }
.g-b { width: 551px; margin-left: 4px; padding-left: 5px; }
.g-c { flex: 1; margin-left: 2px; }
.ic { width: 16px; height: 16px; flex: none; display: block; }
.ic17 { width: 17px; height: 17px; flex: none; }
.ic14 { width: 14px; height: 14px; flex: none; }
.ic10 { width: 10px; height: 12px; flex: none; }
.ic12 { width: 12px; height: 12px; flex: none; }
.ti { display: inline-flex; align-items: center; gap: 3px; white-space: nowrap; }
.g4 { gap: 4px; } .g5 { gap: 5px; } .g6 { gap: 6px; } .g7 { gap: 7px; } .g8 { gap: 8px; }
.off { color: #8a8a8a; }
.sigma { margin: 0 5px 0 9px; width: 14px; text-align: center; font: bold 14px/16px "Liberation Sans", sans-serif; }
.combo2d { width: 62px; height: 23px; border: 1px solid #555; display: flex; align-items: center; color: #888; padding-left: 3px; flex: none; }
.combo2d .sq { width: 14px; height: 14px; background: #e4e4e4; border: 1px solid #ccc; margin-right: 4px; }
.combo2d .caret { margin-left: 6px; }

/* layout body */
.body { display: flex; height: 624px; margin-top: 3px; }
.nav { width: 165px; flex: none; display: flex; flex-direction: column; }
.navtitle { height: 16px; border: 1px solid #a0a0a0; border-top-color: #777; display: flex; align-items: center; background: #f2f2f2; line-height: 14px; }
.pin { width: 10px; height: 10px; margin-left: 72px; }
.navx { width: 9px; height: 9px; margin-left: 9px; }
.navbtn { height: 22px; margin-left: 1px; border: 1px solid #b4b4b4; background: linear-gradient(#f5f5f5, #ececec); text-align: center; line-height: 21px; flex: none; }
.navtitle + .navbtn { margin-top: 1px; }
.expander { height: 25px; margin-left: 2px; background: linear-gradient(#fff, #f4f4f4); display: flex; align-items: center; gap: 7px; padding-left: 5px; flex: none; }
.pm { width: 16px; height: 15px; }
.treeframe { height: 491px; flex: none; margin-left: 2px; border: 2px solid #a8a8a8; border-top: 1px solid #a8a8a8; background: #f0f0f0; width: 162px; display: flex; flex-direction: column; }
.treeview { height: 472px; display: flex; overflow: hidden; flex: none; }
.tree { width: 144px; background: #fff; padding-top: 4px; flex: none; overflow: hidden; }
.vscroll { display: flex; flex-direction: column; background: #f0f0f0; }
.vs-nav { width: 15px; }
.vscroll .up, .vscroll .dn { display: block; height: 16px; flex: none; position: relative; }
.vscroll .up::before, .vscroll .dn::before { content: ""; position: absolute; left: 4px; top: 5px; width: 6px; height: 6px; border: solid #666; border-width: 2px 0 0 2px; transform: rotate(45deg); }
.vscroll .dn::before { transform: rotate(225deg); top: 3px; }
.spacer { display: block; }
.s1 { height: 180px; } .s2 { flex: 1; } .s3 { height: 258px; } .s4 { flex: 1; }
.thumb { display: block; background: #c8c8c8; }
.th1 { height: 241px; } .th2 { height: 270px; } .th3 { height: 384px; }
.hscroll { height: 15px; display: flex; align-items: center; flex: none; }
.hthumb { display: block; width: 102px; height: 15px; background: #c8c8c8; margin: 0 11px 0 9px; }
.lf, .rt { display: block; width: 6px; height: 6px; border: solid #555; border-width: 2px 0 0 2px; transform: rotate(-45deg); margin-left: 8px; flex: none; }
.rt { transform: rotate(135deg); margin-left: 0; }

.leaf, .grp { height: 16px; display: flex; align-items: center; white-space: nowrap; position: relative; line-height: 16px; }
.leaf i, .z, .sc tt { font-family: "Liberation Mono", monospace; font-size: 12px; letter-spacing: -1.2px; }
.ti16 { width: 16px; height: 16px; flex: none; }
.leaf { padding-left: 41px; }
.leaf .ti16 { width: 15px; height: 15px; margin-right: 5px; }
.grp { padding-left: 22px; }
.grp .ti16 { margin-right: 5px; }
.chev { position: absolute; left: 7px; top: 4px; width: 6px; height: 6px; border: solid #bbb; border-width: 2px 2px 0 0; transform: rotate(45deg); }
.chev.open { border-color: #444; transform: rotate(135deg); top: 3px; }
.grp::before { content: ""; position: absolute; left: 16px; top: 8px; width: 5px; border-top: 1px dotted #777; }
.root { position: relative; }
.root::before { content: ""; position: absolute; left: 12px; top: -4px; bottom: 8px; border-left: 1px dotted #777; }
.kids { position: relative; }
.kids::before { content: ""; position: absolute; left: 31px; top: -8px; bottom: 8px; border-left: 1px dotted #777; }
.kids-top::before { top: -4px; }
.leaf::before { content: ""; position: absolute; left: 32px; top: 8px; width: 9px; border-top: 1px dotted #777; }
.leaf.sel { background: linear-gradient(to right, transparent 40px, #d9d9d9 40px, #d9d9d9 128px, transparent 128px); }
.ti-tail { width: 14px; height: 14px; position: absolute; left: 129px; top: 1px; }

/* work area */
.work { margin-left: 7px; flex: 1; display: flex; flex-direction: column; min-width: 0; }
.row2 { height: 28px; padding-left: 3px; flex: none; background: linear-gradient(#fafafa, #f2f2f2); }
.floorcombo { width: 66px; height: 24px; background: #fff; margin-left: 5px; display: flex; align-items: center; padding-left: 2px; }
.floorcombo .caret { margin-left: auto; margin-right: 7px; }
.workbody { flex: 1; display: flex; margin-top: 1px; min-height: 0; }
.complist { width: 181px; flex: none; display: flex; flex-direction: column; }
.searchrow { height: 29px; display: flex; align-items: center; background: #fff; padding-top: 3px; }
.searchbox { width: 157px; height: 24px; border: 1px solid #808080; background: #fff; color: #888; padding-left: 2px; line-height: 18px; font-size: 13px; }
.glass { width: 16px; height: 16px; margin-left: 4px; }
.listframe { flex: 1; margin-top: 0; display: flex; border: 1px solid #9a9a9a; border-width: 1px 2px 2px 1px; background: #fff; height: 562px; }
.list { width: 163px; padding-top: 3px; flex: none; overflow: hidden; }
.z { height: 16px; display: flex; align-items: center; position: relative; padding-left: 62px; color: #111; }
.z svg { width: 11px; height: 11px; position: absolute; left: 43px; top: 2px; }
.z::before { content: ""; position: absolute; left: 31px; top: 0; height: 16px; border-left: 1px dotted #777; }
.z::after { content: ""; position: absolute; left: 32px; top: 8px; width: 8px; border-top: 1px dotted #777; }
.z.cur::before { height: 8px; }
.z.cur { background: linear-gradient(to right, transparent 40px, #316ac5 40px, #316ac5 109px, transparent 109px); }
.z em { color: #0a1a3a; }
.vs-list { width: 16px; }
.props { flex: 1; margin-left: 8px; display: flex; flex-direction: column; min-width: 0; }
.proptab { height: 19px; width: 54px; background: #fff; padding-left: 4px; line-height: 18px; flex: none; position: relative; }
.propframe { flex: 1; background: #fff; display: flex; justify-content: space-between; padding: 5px 6px 3px 2px; border-top: 1px solid #e4e4e4; }
.grid { width: 32px; border: 1px solid #bdbdbd; border-bottom: 0; flex: none; height: 100%; }
.gh, .gr { display: flex; border-bottom: 1px solid #d0d0d0; }
.gh { height: 24px; }
.gr { height: 19px; }
.grid b { width: 21px; background: #f0f0f0; text-align: center; font: 12px/18px "Noto Sans", sans-serif; flex: none; border-right: 1px solid #d0d0d0; }
.grid u { flex: 1; display: block; font-size: 12px; }
.grid u:not(:empty) { border: 1px solid #c8c8c8; margin: 2px 0 2px 2px; padding-left: 1px; line-height: 11px; }
.gr.now b { background: #fdd08a; color: #402050; }
.gr.now u { background: #0078d7; }
.vs-prop { width: 14px; border: 0; }
.vs-prop .up { height: 18px; }

/* status */
.status { height: 20px; margin-top: 1px; display: flex; padding-top: 1px; }
.sc { height: 19px; border: 1px solid #dcdcdc; background: linear-gradient(#fdfdfd, #f2f2f2); white-space: nowrap; line-height: 17px; padding-left: 1px; margin-right: 2px; }
.sc tt { line-height: 17px; }
.s-a { width: 148px; } .s-b { width: 77px; } .s-c { width: 98px; } .s-d { width: 48px; } .s-e { width: 914px; } .s-f { flex: 1; margin-right: 0; }

/* taskbar */
.taskbar { height: 41px; background: #04161c; display: flex; color: #fff; position: relative; }
.start { width: 48px; background: #000; display: flex; align-items: center; justify-content: center; }
.start svg { width: 16px; height: 16px; }
.tsearch { width: 344px; background: #f0f0f0; display: flex; align-items: center; color: #555; font-size: 14px; padding-left: 10px; }
.cortana { width: 20px; height: 20px; border: 3px solid #111; border-radius: 50%; margin-right: 10px; flex: none; }
.mic { width: 12px; height: 16px; margin-left: auto; margin-right: 15px; }
.tapps { display: flex; align-items: center; width: 511px; padding-left: 16px; position: relative; }
.tv { width: 16px; height: 14px; }
.app { width: 22px; height: 22px; flex: none; display: block; }
.a2 { margin-left: 31px; }
.a3 { margin-left: 31px; }
.a4 { margin-left: 28px; position: relative; display: block; }
.tbell { position: absolute; left: 14px; top: -5px; width: 14px; height: 14px; }
.a5 { margin-left: 21px; width: 40px; height: 41px; display: flex; align-items: center; justify-content: center; border-bottom: 2px solid #76b9ed; }
.pdf { width: 24px; height: 24px; border-radius: 3px; background: #c55f13; border: 1px solid #999; color: #ecd0b0; font: bold 9px/22px "Liberation Sans", sans-serif; text-align: center; }
.tray { flex: 1; display: flex; align-items: center; position: relative; }
.traybar { width: 17px; height: 41px; background: #f0f0f0; margin-left: 3px; position: relative; flex: none; }
.traybar i { position: absolute; left: 5px; width: 6px; height: 6px; border: solid #666; border-width: 2px 0 0 2px; transform: rotate(45deg); top: 10px; }
.traybar i + i { top: 26px; transform: rotate(225deg); }
.people { width: 18px; height: 18px; margin-left: 21px; }
.cpu { width: 54px; margin-left: 27px; display: flex; flex-direction: column; align-items: center; font-size: 12px; line-height: 18px; color: #e8e8e8; }
.chevup { width: 12px; height: 7px; margin-left: 18px; }
.batt { width: 16px; height: 11px; margin-left: 10px; }
.wifi { width: 14px; height: 13px; margin-left: 9px; }
.vol { width: 16px; height: 13px; margin-left: 8px; }
.kbd { width: 23px; height: 12px; margin-left: 8px; }
.zh { margin-left: 10px; font-size: 13px; }
.tray-s { width: 16px; height: 16px; margin-left: 13px; }
.clock { width: 60px; margin-left: 18px; display: flex; flex-direction: column; align-items: center; font-size: 12.5px; line-height: 18px; color: #e8e8e8; font-family: "Noto Sans", sans-serif; }
.notif { width: 16px; height: 15px; margin-left: 18px; }

/* floating IME and speed ball */
.ball { position: absolute; left: 719px; top: -14px; width: 44px; height: 24px; border-radius: 0 0 22px 22px; background: #5cc05c; border: 2px solid #a8a8a8; border-top: 0; color: #fff; text-align: center; font: bold 10px/32px "Liberation Sans", sans-serif; }
.ball span { display: block; padding-top: 4px; }
.ime { position: absolute; left: 680px; top: 8px; width: 207px; height: 24px; background: #fff; border: 1px solid #a8c0d8; display: flex; align-items: center; padding-left: 34px; gap: 6px; }
.ime-s { position: absolute; left: -1px; top: -2px; width: 28px; height: 28px; }
.ime-en { color: #1b6fc0; font-size: 15px; font-weight: bold; margin-right: 2px; }
.ime-i { width: 16px; height: 16px; flex: none; }

/* section editor dialog */
.dialog { position: absolute; left: 395px; top: 133px; width: 949px; height: 570px; background: #b9d1ea; border: 1px solid #333; border-bottom-color: #0c5a6a; display: flex; flex-direction: column; }
.dtitle { height: 29px; flex: none; background: linear-gradient(#99b4d1, #b9d1ea); padding: 10px 0 0 7px; line-height: 16px; }
.dcontent { margin: 0 7px 8px 7px; flex: 1; background: #f0f0f0; display: flex; flex-direction: column; min-height: 0; }
.dtabs { height: 21px; display: flex; align-items: flex-end; padding-left: 2px; flex: none; }
.dtab { width: 41px; height: 18px; text-align: center; background: #f0f0f0; border: 1px solid #d0d0d0; border-bottom: 0; line-height: 17px; padding-right: 4px; }
.dtab.on { width: 45px; height: 21px; background: #fff; border-left: 0; line-height: 16px; padding-right: 6px; }
.dpanel { height: 484px; flex: none; border: 2px solid #d8d8d8; border-color: #d8d8d8 #fff #fff #e8e8e8; background: #f0f0f0; display: flex; flex-direction: column; margin-right: 1px; padding: 2px 0 0 2px; }
.dtools { flex: none; height: 56px; }
.dbar { display: flex; align-items: center; background: linear-gradient(#fbfbfb, #f5f5f5); white-space: nowrap; padding-left: 7px; }
.bar1 { height: 26px; width: 522px; }
.bar2 { height: 25px; margin-top: 2px; width: 320px; }
.lbl { white-space: nowrap; }
.hbtn { display: inline-flex; align-items: center; justify-content: center; height: 23px; background: #e4eff9; border: 1px solid #1a82d8; white-space: nowrap; gap: 4px; flex: none; }
.b-line { width: 33px; }
.b-sel { width: 51px; }
.b-str { width: 34px; }
.b-end { width: 75px; }
.b-ortho { width: 50px; height: 23px; }
.rebarcombo { width: 79px; height: 24px; background: #fff; margin-left: 5px; display: flex; align-items: center; padding-left: 2px; font-family: "Open Sans", sans-serif; font-size: 12px; flex: none; }
.rebarcombo .caret { margin-left: auto; margin-right: 5px; }
.canvas { width: 924px; height: 395px; margin-left: 1px; border: 2px solid #f00; border-left-width: 1px; background: #151922; flex: none; overflow: hidden; }
.canvas svg { display: block; }
.dbottom { flex: none; display: flex; align-items: center; height: 25px; padding: 2px 0 0 2px; }
.snapgroup { margin-left: 6px; height: 25px; width: 103px; background: #f6f6f6; display: flex; align-items: center; padding-left: 4px; }
.dstatus { flex: none; display: flex; height: 21px; margin-top: 5px; gap: 4px; }
.coord { width: 97px; background: linear-gradient(#f8f8f8, #f0f0f0); border: 1px solid #d8d8d8; font: 11px/19px "Open Sans", sans-serif; padding-left: 4px; }
.msg { flex: 1; background: linear-gradient(#fff, #f4f4f4); border: 1px solid #d8d8d8; line-height: 19px; position: relative; }
.grip { position: absolute; right: 2px; bottom: 2px; width: 11px; height: 11px; background: radial-gradient(circle, #aaa 1px, transparent 1.200px) 0 0 / 4px 4px; }

/* drawing */
.blk path { fill: none; stroke: #000; stroke-width: 1; stroke-dasharray: 5 2; }
.dia path { fill: none; stroke: #000; }
.grid-g { fill: none; stroke: #50545c; stroke-dasharray: 6 4; }
.wdash { fill: none; stroke: #999; stroke-dasharray: 2 2; }
.rect { fill: none; stroke: #eee; stroke-width: 4; }
.bdash { fill: none; stroke: #cfe2f2; stroke-dasharray: 4 3; }
.bdash2 { fill: none; stroke: #8db4d8; stroke-dasharray: 4 3; }
.wdash2 { fill: none; stroke: #fff; stroke-dasharray: 4 2; }
.dim path { fill: none; stroke: #82b46e; }
.wline { fill: none; stroke: #fff; }
.rebar { fill: none; stroke: #c4161c; stroke-width: 11; }
.rebarf { fill: #c4161c; }
.pt { fill: #8a1a10; stroke: #f5cf1a; stroke-width: 2; }
.t19 { font: 19px "Liberation Serif", serif; fill: #f4f4f4; }
.tdim { font: 12px "Liberation Mono", monospace; fill: #3b4048; }
.tgreen { font: 14px "Liberation Sans", sans-serif; fill: #00f000; }
.tlae { font: 13px "Liberation Mono", monospace; fill: #00f000; }
```
